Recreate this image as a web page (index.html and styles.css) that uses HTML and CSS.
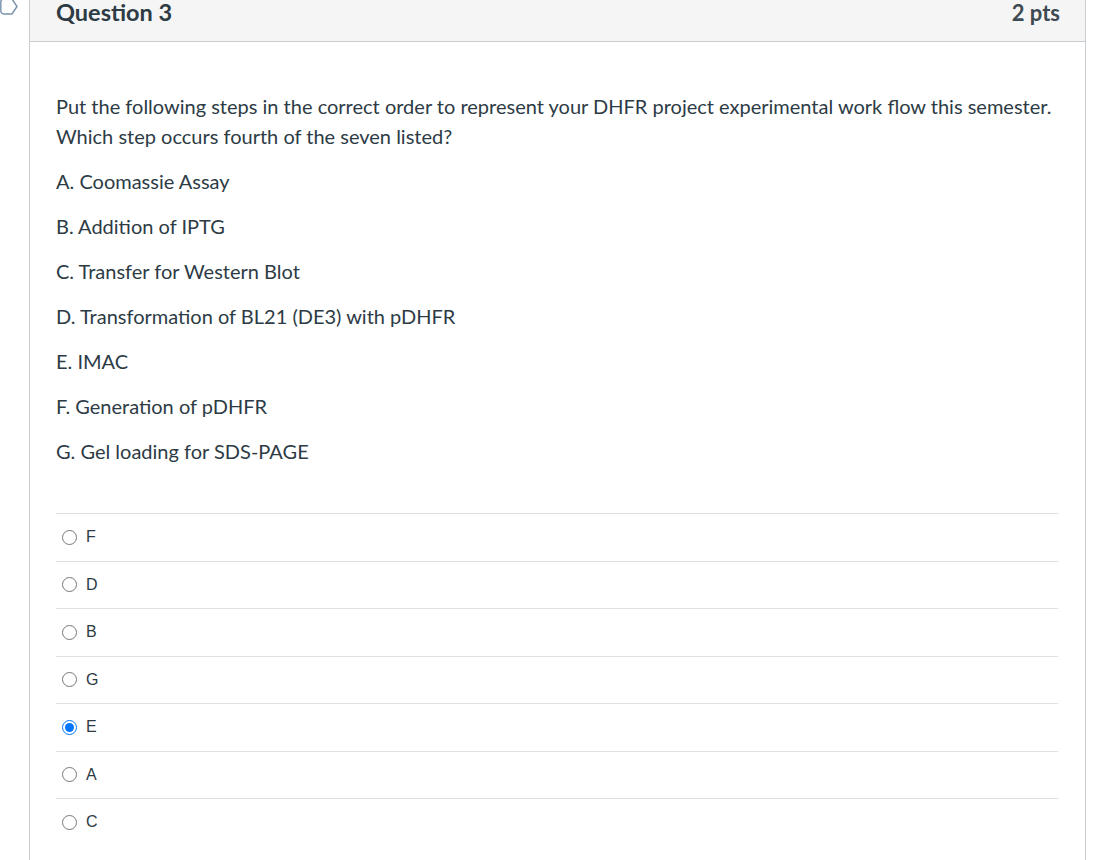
FILE: index.html
```html
<!DOCTYPE html>
<html lang="en">
<head>
    <meta charset="UTF-8">
    <title>Question 3</title>
    <link rel="stylesheet" href="styles.css">
</head>
<body>
    <div class="question-row">
        <!-- flag marker -->
        <div class="flag">
            <svg width="20" height="20" viewBox="0 0 20 20">
                <path d="M4 -1 H12 L17 6.5 L12 14 H4 Q0.8 14 0.8 10.5 V2 Q0.8 -1 4 -1 Z" fill="none" stroke="#7892ab" stroke-width="1.4" stroke-linejoin="round"/>
            </svg>
        </div>

        <div class="question-card">
            <div class="question-header">
                <span class="question-name">Question 3</span>
                <span class="question-points">2 pts</span>
            </div>

            <div class="question-body">
                <div class="question-text">
                    <p>Put the following steps in the correct order to represent your DHFR project experimental work flow this semester. Which step occurs fourth of the seven listed?</p>
                    <p>A. Coomassie Assay</p>
                    <p>B. Addition of IPTG</p>
                    <p>C. Transfer for Western Blot</p>
                    <p>D. Transformation of BL21 (DE3) with pDHFR</p>
                    <p>E. IMAC</p>
                    <p>F. Generation of pDHFR</p>
                    <p>G. Gel loading for SDS-PAGE</p>
                </div>

                <div class="answers">
                    <label class="answer"><input type="radio" name="q3"> <span>F</span></label>
                    <label class="answer"><input type="radio" name="q3"> <span>D</span></label>
                    <label class="answer"><input type="radio" name="q3"> <span>B</span></label>
                    <label class="answer"><input type="radio" name="q3"> <span>G</span></label>
                    <label class="answer"><input type="radio" name="q3" checked> <span>E</span></label>
                    <label class="answer"><input type="radio" name="q3"> <span>A</span></label>
                    <label class="answer"><input type="radio" name="q3"> <span>C</span></label>
                </div>
            </div>
        </div>
    </div>
</body>
</html>
```

FILE: styles.css
```css
:root {
    --text-color: #2d3b45;
    --border-color: #c7cdd1;
}

body {
    margin: 0;
    background: #fff;
    color: var(--text-color);
    font-family: Lato, 'Noto Sans', sans-serif;
}

.question-row {
    display: flex;
    margin-right: 11px;
}

.flag {
    width: 29px;
    flex-shrink: 0;
}

    .flag svg {
        display: block;
    }

/* 题目卡片 */
.question-card {
    flex: 1;
    border-left: 1px solid var(--border-color);
    border-right: 1px solid var(--border-color);
    min-height: 860px;
}

.question-header {
    display: flex;
    justify-content: space-between;
    align-items: baseline;
    height: 42px;
    box-sizing: border-box;
    background: #f5f5f5;
    border-bottom: 1px solid var(--border-color);
    padding: 1px 25px 0 26px;
    font-size: 22px;
    line-height: 22px;
    font-weight: 700;
}

.question-name {
    font-size: 23.5px;
}

.question-points {
    color: #3e4a52;
}

.question-body {
    padding: 49px 27px 0 26px;
}

.question-text {
    font-size: 20px;
    line-height: 30px;
}

    .question-text p {
        margin: 0 0 15px;
    }

/* 选项 */
.answers {
    margin-top: 47px;
}

.answer {
    display: flex;
    align-items: center;
    height: 47.5px;
    border-top: 1px solid #e0e0e0;
    box-sizing: border-box;
    font-family: 'Liberation Sans', Arial, sans-serif;
    font-size: 16px;
    color: #2d3b45;
}

    .answer input {
        width: 15px;
        height: 15px;
        margin: 0 9px 0 6px;
    }
```
